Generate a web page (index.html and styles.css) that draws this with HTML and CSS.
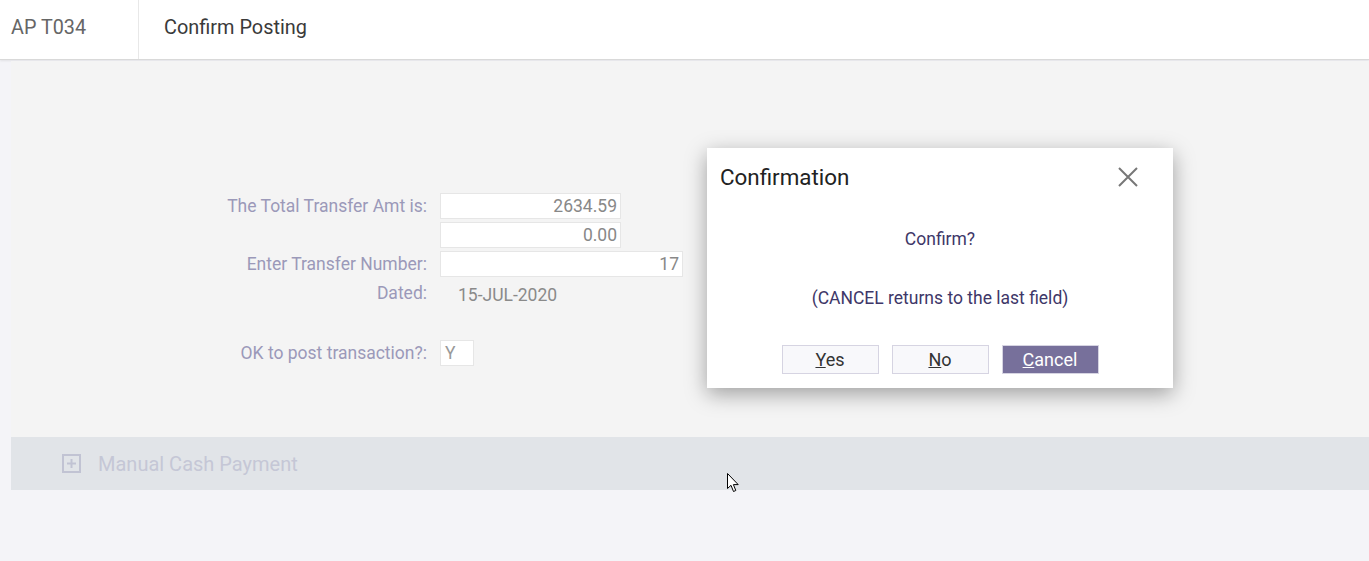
FILE: index.html
```html
<!DOCTYPE html>
<html>
<head>
<meta charset="utf-8">
<title>AP T034 - Confirm Posting</title>
<link rel="stylesheet" href="styles.css">
</head>
<body>
<header class="topbar">
  <div class="code">AP T034</div>
  <div class="title">Confirm Posting</div>
</header>
<main class="main">
  <section class="panel">
    <div class="form">
      <div class="label">The Total Transfer Amt is:</div>
      <div class="field w180">2634.59</div>
      <div class="label"></div>
      <div class="field w180">0.00</div>
      <div class="label">Enter Transfer Number:</div>
      <div class="field w242">17</div>
      <div class="label">Dated:</div>
      <div class="value">15-JUL-2020</div>
      <div class="label spacer-top">OK to post transaction?:</div>
      <div class="field small spacer-top">Y</div>
    </div>
  </section>
  <section class="collapse">
    <svg class="plus" width="19" height="19" viewBox="0 0 19 19">
      <rect x="1" y="1" width="17" height="17" fill="none" stroke="#c1c3d3" stroke-width="2"/>
      <path d="M9.5 5v9M5 9.5h9" stroke="#c1c3d3" stroke-width="2"/>
    </svg>
    <span class="collapse-text">Manual Cash Payment</span>
  </section>
</main>

<div class="dialog">
  <div class="dlg-head">
    <span class="dlg-title">Confirmation</span>
    <svg class="close" width="22" height="22" viewBox="0 0 22 22">
      <path d="M2 2L20 20M20 2L2 20" stroke="#777" stroke-width="2"/>
    </svg>
  </div>
  <div class="dlg-msg first">Confirm?</div>
  <div class="dlg-msg second">(CANCEL returns to the last field)</div>
  <div class="dlg-buttons">
    <button class="btn"><u>Y</u>es</button>
    <button class="btn"><u>N</u>o</button>
    <button class="btn primary"><u>C</u>ancel</button>
  </div>
</div>

<svg class="cursor" width="13" height="20" viewBox="0 0 13 20">
  <path d="M0.5 0.5L0.5 15.5L4 12.3L6.5 18.5L8.8 17.5L6.4 11.6L11.2 11.6Z" fill="#fff" stroke="#000" stroke-width="1"/>
</svg>
</body>
</html>
```

FILE: styles.css
```css
* { box-sizing: border-box; }
html, body { margin: 0; padding: 0; }
body {
  width: 1369px;
  height: 561px;
  overflow: hidden;
  background: #f4f4f8;
  font-family: Roboto, "Liberation Sans", sans-serif;
  position: relative;
}
.topbar {
  height: 60px;
  background: #fff;
  border-bottom: 1px solid #d9d9d9;
  box-shadow: 0 1px 2px rgba(0,0,0,0.08);
  display: flex;
  align-items: stretch;
}
.code {
  width: 139px;
  padding-left: 11px;
  padding-bottom: 5px;
  border-right: 1px solid #e8e8e8;
  display: flex;
  align-items: center;
  font-size: 19.8px;
  color: #666;
}
.title {
  padding-left: 25px;
  padding-bottom: 5px;
  display: flex;
  align-items: center;
  font-size: 19.9px;
  color: #3a3a3a;
}
.main {
  padding-left: 11px;
  padding-top: 1px;
}
.panel {
  height: 376px;
  background: #f4f4f4;
  padding-top: 132px;
}
.form {
  display: grid;
  grid-template-columns: 416px auto;
  column-gap: 13px;
  row-gap: 3px;
  align-items: center;
  justify-items: start;
}
.label {
  justify-self: end;
  font-size: 17.5px;
  color: #9b99b9;
  height: 26px;
  line-height: 26px;
}
.field {
  height: 26px;
  background: #fff;
  border: 1px solid #e6e6e6;
  font-size: 17.5px;
  color: #888;
  line-height: 25px;
  text-align: right;
  padding-right: 3px;
}
.w180 { width: 181px; }
.w242 { width: 243px; }
.field.small { width: 34px; text-align: left; padding-left: 4px; color: #999; }
.value {
  font-size: 17.5px;
  color: #8a8a8a;
  padding-left: 18px;
  height: 26px;
  line-height: 30px;
}
.spacer-top { margin-top: 31px; }
.collapse {
  height: 53px;
  background: #e1e4e8;
  display: flex;
  align-items: center;
  padding-left: 51px;
}
.plus { margin-right: 17px; }
.collapse-text {
  font-size: 20px;
  color: #c5c7d6;
}
.dialog {
  position: absolute;
  left: 707px;
  top: 148px;
  width: 466px;
  height: 240px;
  background: #fff;
  box-shadow: 0 6px 20px rgba(0,0,0,0.35);
}
.dlg-head {
  height: 58px;
  display: flex;
  align-items: center;
  justify-content: space-between;
  padding: 0 34px 0 13px;
}
.dlg-title {
  font-size: 22.4px;
  color: #222;
}
.dlg-msg {
  text-align: center;
  font-size: 17.5px;
  color: #3e3768;
}
.dlg-msg.first { margin-top: 23px; }
.dlg-msg.second { margin-top: 39px; }
.dlg-buttons {
  margin-top: 37px;
  display: flex;
  justify-content: center;
  gap: 13px;
}
.btn {
  width: 97px;
  height: 29px;
  background: #f8f8fb;
  border: 1px solid #d6d4e2;
  font-family: Roboto, "Liberation Sans", sans-serif;
  font-size: 18px;
  color: #333;
  padding: 0;
}
.btn.primary {
  background: #77709b;
  border-color: #d6d4e2;
  color: #fff;
}
.cursor {
  position: absolute;
  left: 727px;
  top: 473px;
}
```
